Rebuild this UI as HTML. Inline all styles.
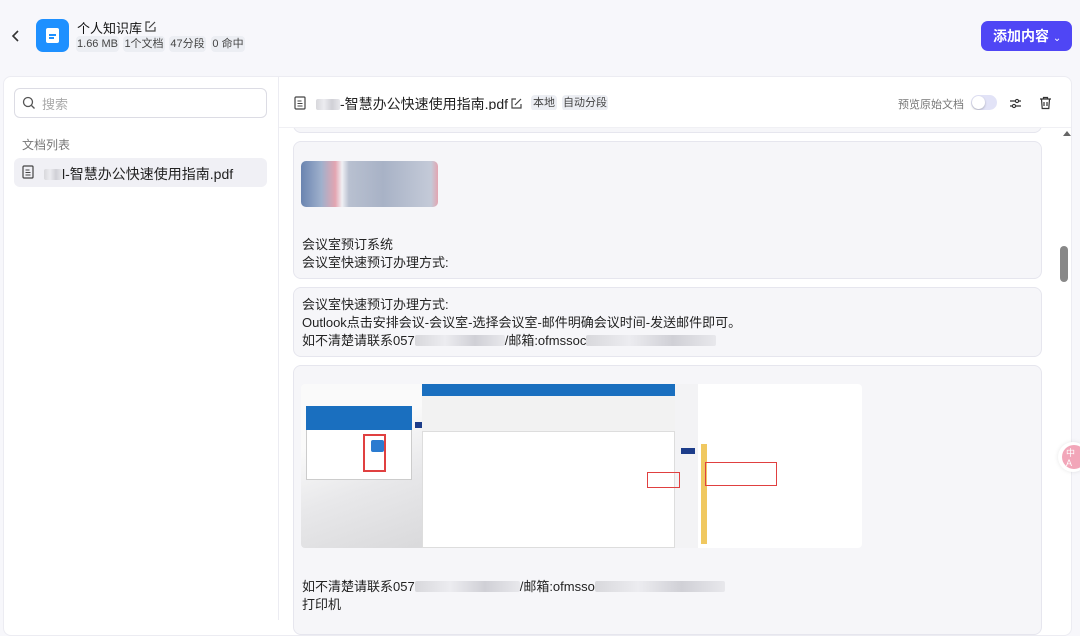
<!DOCTYPE html>
<html><head><meta charset="utf-8"><style>
*{box-sizing:border-box;margin:0;padding:0}
body{width:1080px;height:620px;overflow:hidden;background:#f7f7fb;font-family:"Liberation Sans","Noto Sans CJK SC",sans-serif;color:#1d1f24;position:relative}
.abs{position:absolute}
.tag{position:absolute;background:#eceef3;border-radius:4px;font-size:11px;color:#444;height:16px;line-height:16px;text-align:center}
.card{position:absolute;left:293px;width:749px;background:#f6f6f9;border:1px solid #e6e6ee;border-radius:8px}
.txt{font-size:13px;line-height:18px;color:#222}
.blur{display:inline-block;height:11px;background:linear-gradient(90deg,#d8d8dc,#ececf0,#d0d0d6,#e8e8ec);vertical-align:-1px;border-radius:2px}
</style></head><body>
<!-- header -->
<svg class="abs" style="left:11px;top:29px" width="10" height="14" viewBox="0 0 10 14"><path d="M7 2 L2 7 L7 12" stroke="#333" stroke-width="1.6" fill="none"/></svg>
<div class="abs" style="left:36px;top:19px;width:33px;height:33px;border-radius:7px;background:#1e90ff"></div>
<div class="abs" style="left:46px;top:28px;width:13px;height:15px;border-radius:2px;background:#fff"></div>
<div class="abs" style="left:49px;top:34px;width:7px;height:1.5px;background:#1e90ff"></div>
<div class="abs" style="left:49px;top:37px;width:5px;height:1.5px;background:#1e90ff"></div>
<div class="abs" style="left:77px;top:18px;font-size:13px;color:#111">个人知识库</div>
<svg class="abs" style="left:144px;top:20px" width="13" height="13" viewBox="0 0 13 13"><path d="M6 2H2v9h9V7M5 8l6-6" stroke="#444" stroke-width="1.2" fill="none"/></svg>
<div class="tag" style="left:76px;top:36px;width:43px">1.66 MB</div>
<div class="tag" style="left:123px;top:36px;width:42px">1个文档</div>
<div class="tag" style="left:169px;top:36px;width:37px">47分段</div>
<div class="tag" style="left:211px;top:36px;width:34px">0 命中</div>
<div class="abs" style="left:981px;top:21px;width:91px;height:30px;border-radius:7px;background:#4f46f5;color:#fff;font-size:14px;font-weight:bold;line-height:30px;padding-left:12px">添加内容 <span style="font-size:10px;font-weight:normal">&#8964;</span></div>
<!-- main panel -->
<div class="abs" style="left:3px;top:76px;width:1069px;height:560px;background:#fff;border:1px solid #ececf2;border-radius:8px"></div>
<div class="abs" style="left:278px;top:77px;width:1px;height:543px;background:#ececf2"></div>
<div class="abs" style="left:14px;top:88px;width:253px;height:30px;border:1px solid #dcdce4;border-radius:6px"></div>
<svg class="abs" style="left:22px;top:96px" width="14" height="14" viewBox="0 0 14 14"><circle cx="6" cy="6" r="4.5" stroke="#555" stroke-width="1.3" fill="none"/><path d="M9.5 9.5L12.5 12.5" stroke="#555" stroke-width="1.3"/></svg>
<div class="abs" style="left:42px;top:94px;font-size:13px;color:#aaa">搜索</div>
<div class="abs" style="left:22px;top:136px;font-size:12px;color:#777">文档列表</div>
<div class="abs" style="left:14px;top:158px;width:253px;height:29px;border-radius:6px;background:#f0f0f5"></div>
<svg class="abs" style="left:22px;top:165px" width="12" height="14" viewBox="0 0 12 14"><rect x="1" y="1" width="10" height="12" rx="1" stroke="#444" stroke-width="1.2" fill="none"/><path d="M3.5 5h4M3.5 7.5h5M3.5 10h5" stroke="#444" stroke-width="1"/></svg>
<div class="abs" style="left:44px;top:164px;font-size:14px;color:#222"><span class="blur" style="width:18px"></span>l-智慧办公快速使用指南.pdf</div>
<!-- right header -->
<svg class="abs" style="left:294px;top:96px" width="12" height="14" viewBox="0 0 12 14"><rect x="1" y="1" width="10" height="12" rx="1" stroke="#444" stroke-width="1.2" fill="none"/><path d="M3.5 5h4M3.5 7.5h5M3.5 10h5" stroke="#444" stroke-width="1"/></svg>
<div class="abs" style="left:316px;top:94px;font-size:14px;color:#222"><span class="blur" style="width:24px"></span>-智慧办公快速使用指南.pdf</div>
<svg class="abs" style="left:510px;top:97px" width="13" height="13" viewBox="0 0 13 13"><path d="M6 2H2v9h9V7M5 8l6-6" stroke="#444" stroke-width="1.2" fill="none"/></svg>
<div class="tag" style="left:531px;top:95px;width:26px">本地</div>
<div class="tag" style="left:562px;top:95px;width:46px">自动分段</div>
<div class="abs" style="left:898px;top:96px;font-size:11px;color:#777">预览原始文档</div>
<div class="abs" style="left:971px;top:95px;width:26px;height:15px;border-radius:8px;background:#e2e3f7"></div>
<div class="abs" style="left:972px;top:96px;width:13px;height:13px;border-radius:50%;background:#fff;box-shadow:0 1px 2px rgba(0,0,0,.25)"></div>
<svg class="abs" style="left:1009px;top:97px" width="13" height="13" viewBox="0 0 13 13"><path d="M1 4h11M1 9h11" stroke="#333" stroke-width="1.2"/><circle cx="8" cy="4" r="1.6" fill="#fff" stroke="#333" stroke-width="1.1"/><circle cx="5" cy="9" r="1.6" fill="#fff" stroke="#333" stroke-width="1.1"/></svg>
<svg class="abs" style="left:1039px;top:96px" width="13" height="14" viewBox="0 0 13 14"><path d="M1 3h11M4.5 3V1.5h4V3M2.5 3l.7 9.5h6.6l.7-9.5M5 6v4M8 6v4" stroke="#333" stroke-width="1.2" fill="none"/></svg>
<!-- cards -->
<div class="card" style="top:110px;height:23px"></div>
<div class="abs" style="left:279px;top:110px;width:780px;height:18px;background:#fff"></div>
<div class="abs" style="left:279px;top:127px;width:792px;height:1px;background:#f0f0f4"></div>
<div class="card" style="top:141px;height:138px">
 <div class="abs" style="left:7px;top:19px;width:137px;height:46px;border-radius:5px;background:linear-gradient(90deg,#6a84b0 0%,#9fb0cc 15%,#e3a5b1 25%,#f0f0f4 30%,#b8c0d0 35%,#a8b2c6 60%,#c4cad8 95%,#e3a5b1 100%)"></div>
 <div class="abs txt" style="left:8px;top:94px">会议室预订系统<br>会议室快速预订办理方式:</div>
</div>
<div class="card" style="top:287px;height:70px">
 <div class="abs txt" style="left:8px;top:8px">会议室快速预订办理方式:<br>Outlook点击安排会议-会议室-选择会议室-邮件明确会议时间-发送邮件即可。<br>如不清楚请联系057<span class="blur" style="width:90px"></span>/邮箱:ofmssoc<span class="blur" style="width:130px"></span></div>
</div>
<div class="card" style="top:365px;height:270px">
 <div class="abs" style="left:7px;top:18px;width:561px;height:164px;border-radius:4px;background:#f3f3f5;overflow:hidden">
  <div class="abs" style="left:0;top:0;width:140px;height:164px;background:linear-gradient(160deg,#fafafa 30%,#e8e8ea 60%,#d8d8da 100%)"></div>
  <div class="abs" style="left:5px;top:22px;width:106px;height:74px;background:#fff;border:1px solid #ccc"></div>
  <div class="abs" style="left:5px;top:22px;width:106px;height:24px;background:#1a6fbf"></div>
  <div class="abs" style="left:62px;top:50px;width:23px;height:38px;border:2px solid #e04040"></div>
  <div class="abs" style="left:70px;top:56px;width:13px;height:12px;background:#2b7bd0;border-radius:2px"></div>
  <div class="abs" style="left:114px;top:38px;width:14px;height:6px;background:#1d3d8a"></div>
  <div class="abs" style="left:121px;top:0;width:253px;height:164px;background:#fff;border:1px solid #ddd"></div>
  <div class="abs" style="left:121px;top:0;width:253px;height:12px;background:#1a6fbf"></div>
  <div class="abs" style="left:121px;top:12px;width:253px;height:36px;background:#f2f2f2;border-bottom:1px solid #ddd"></div>
  <div class="abs" style="left:346px;top:88px;width:33px;height:16px;border:1.5px solid #e04040"></div>
  <div class="abs" style="left:380px;top:64px;width:14px;height:6px;background:#1d3d8a"></div>
  <div class="abs" style="left:397px;top:0;width:164px;height:164px;background:#fff"></div>
  <div class="abs" style="left:400px;top:60px;width:6px;height:100px;background:#f0c860"></div>
  <div class="abs" style="left:404px;top:78px;width:72px;height:24px;border:1.5px solid #e04040"></div>
 </div>
 <div class="abs txt" style="left:8px;top:212px">如不清楚请联系057<span class="blur" style="width:105px"></span>/邮箱:ofmsso<span class="blur" style="width:130px"></span><br>打印机</div>
</div>
<!-- scrollbar -->
<div class="abs" style="left:1063px;top:131px;width:0;height:0;border-left:4px solid transparent;border-right:4px solid transparent;border-bottom:5px solid #666"></div>
<div class="abs" style="left:1060px;top:246px;width:8px;height:36px;border-radius:4px;background:#888"></div>
<div class="abs" style="left:1058px;top:442px;width:30px;height:30px;border-radius:50%;background:#fff;box-shadow:0 0 4px rgba(0,0,0,.1)"></div>
<div class="abs" style="left:1062px;top:445px;width:24px;height:24px;border-radius:50%;background:#f2a6b9;color:#fff;font-size:9px;line-height:10px;padding:3px 0 0 4px">中<br>A</div>
</body></html>
